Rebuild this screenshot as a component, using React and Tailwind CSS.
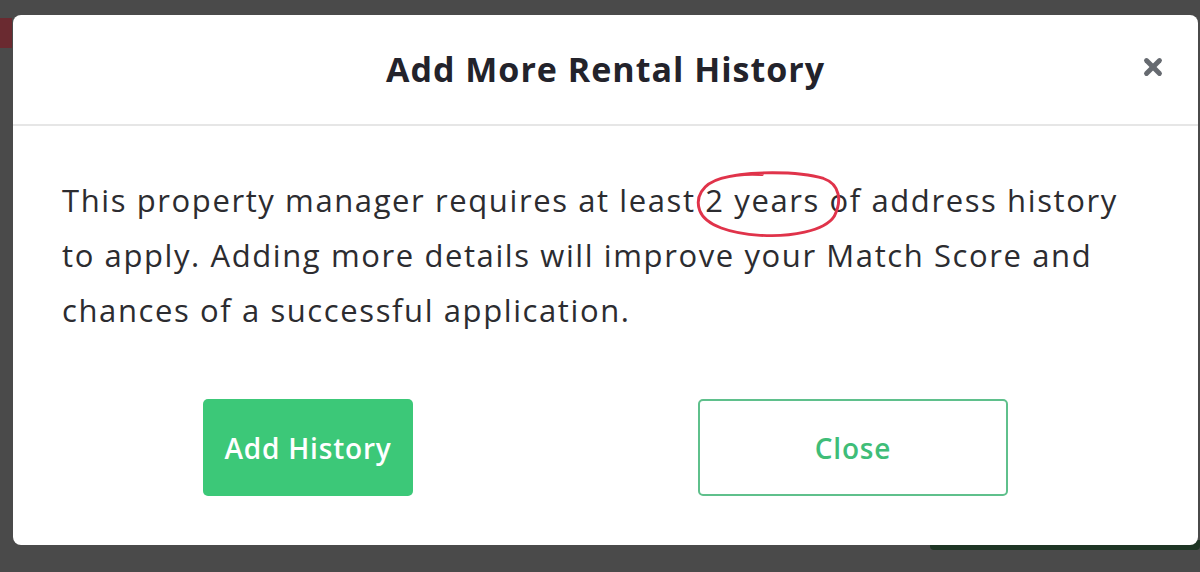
import { X } from 'lucide-react';

// hand-drawn red loop around the highlighted words
function Circled({ children }) {
  return (
    <span className="relative inline-block">
      {children}
      <svg
        className="absolute -left-[13px] -top-[4px] pointer-events-none"
        width="152"
        height="72"
        viewBox="0 0 156 76"
        preserveAspectRatio="none"
        fill="none"
      >
        <path
          d="M30 10 C55 2 110 2 135 10 C152 16 154 34 146 50 C136 66 100 72 70 70 C40 68 14 60 8 44 C3 30 10 16 30 10 C44 6 60 5 72 6"
          stroke="#e0334a"
          strokeWidth="3"
          strokeLinecap="round"
        />
      </svg>
    </span>
  );
}

export default function App() {
  return (
    <div
      className="relative w-[1200px] h-[572px] bg-[#4a4a4a] overflow-hidden pl-[13px] pt-[15px]"
      style={{ fontFamily: '"Open Sans", Lato, sans-serif' }}
    >
      {/* bits of the page behind the overlay */}
      <div className="absolute left-0 top-[18px] w-[12px] h-[30px] bg-[#6a2a30]" />
      <div className="absolute left-[930px] top-[540px] w-[270px] h-[10px] bg-[#1e3524] rounded-b" />

      <div className="relative w-[1185px] h-[530px] bg-white rounded-[8px] flex flex-col">
        <div className="relative h-[111px] flex items-center justify-center border-b-2 border-[#e6e6e6]">
          <h2 className="text-[34px] font-bold text-[#23232b] tracking-[1px]">Add More Rental History</h2>
          <button className="absolute right-[32px] top-[39px] text-[#666a70]">
            <X className="w-[26px] h-[26px]" strokeWidth={4.5} />
          </button>
        </div>
        <div className="flex-1 px-[49px] pt-[47px]">
          <p className="text-[31px] leading-[55px] text-[#2c2c30] tracking-[1.6px]">
            This property manager requires at least <Circled>2 years</Circled> of address history<br />
            to apply. Adding more details will improve your Match Score and<br />
            chances of a successful application.
          </p>
          <div className="flex mt-[61px] pl-[141px] gap-[285px]">
            <button className="w-[210px] h-[97px] rounded-[5px] bg-[#3cc878] text-white text-[28px] font-semibold tracking-[0.8px]">
              Add History
            </button>
            <button className="w-[310px] h-[97px] rounded-[5px] border-2 border-[#5fc08c] bg-white text-[#3fbd78] text-[28px] font-semibold tracking-[0.8px]">
              Close
            </button>
          </div>
        </div>
      </div>
    </div>
  );
}
